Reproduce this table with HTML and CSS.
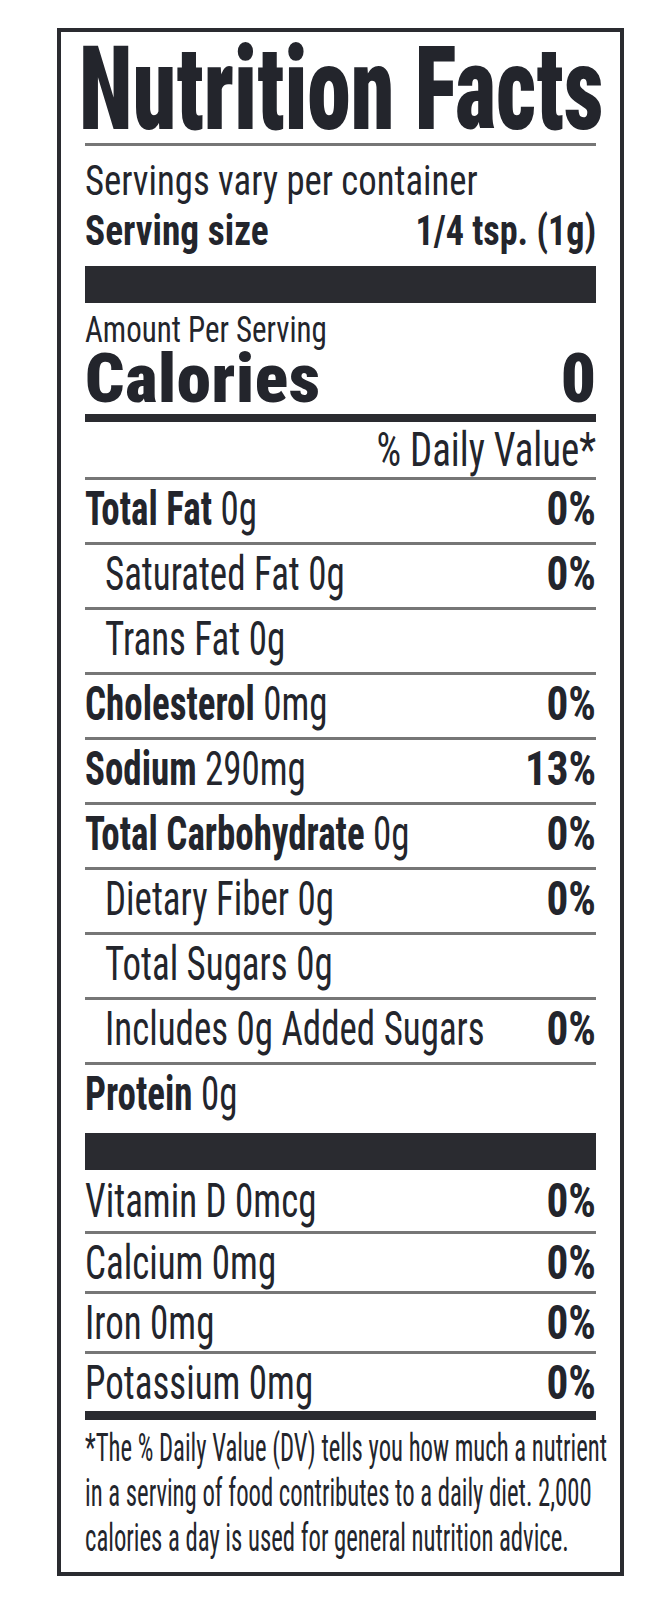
FILE: index.html
```html
<!DOCTYPE html>
<html lang="en">
<head>
<meta charset="utf-8">
<title>Nutrition Facts</title>
<link rel="stylesheet" href="styles.css">
</head>
<body>
<section class="label">
  <h1 class="title">Nutrition Facts</h1>
  <div class="rule"></div>
  <p class="servings">Servings vary per container</p>
  <div class="size-row"><span class="size-name">Serving size</span><span class="size-val">1/4 tsp. (1g)</span></div>
  <div class="bar"></div>
  <p class="amount">Amount Per Serving</p>
  <div class="cal-row"><span>Calories</span><span>0</span></div>
  <div class="thick"></div>
  <div class="dv"><span class="dv-text">% Daily Value*</span></div>
  <ul class="rows">
    <li class="row"><span class="name"><b>Total Fat</b> 0g</span><b class="pct">0%</b></li>
    <li class="row sub"><span class="name">Saturated Fat 0g</span><b class="pct">0%</b></li>
    <li class="row sub"><span class="name">Trans Fat 0g</span></li>
    <li class="row"><span class="name"><b>Cholesterol</b> 0mg</span><b class="pct">0%</b></li>
    <li class="row"><span class="name"><b>Sodium</b> 290mg</span><b class="pct">13%</b></li>
    <li class="row"><span class="name"><b>Total Carbohydrate</b> 0g</span><b class="pct">0%</b></li>
    <li class="row sub"><span class="name">Dietary Fiber 0g</span><b class="pct">0%</b></li>
    <li class="row sub"><span class="name">Total Sugars 0g</span></li>
    <li class="row sub"><span class="name">Includes 0g Added Sugars</span><b class="pct">0%</b></li>
    <li class="row protein"><span class="name"><b>Protein</b> 0g</span></li>
  </ul>
  <div class="bar"></div>
  <ul class="vits">
    <li class="vit"><span class="name">Vitamin D 0mcg</span><b class="pct">0%</b></li>
    <li class="vit"><span class="name">Calcium 0mg</span><b class="pct">0%</b></li>
    <li class="vit"><span class="name">Iron 0mg</span><b class="pct">0%</b></li>
    <li class="vit"><span class="name">Potassium 0mg</span><b class="pct">0%</b></li>
  </ul>
  <div class="thick thick-foot"></div>
  <p class="foot">*The % Daily Value (DV) tells you how much a nutrient<br>in a serving of food contributes to a daily diet. 2,000<br>calories a day is used for general nutrition advice.</p>
</section>
</body>
</html>
```
FILE: styles.css
```css
html, body {
  margin: 0;
  padding: 0;
  background: #ffffff;
}
body {
  font-family: "Roboto Condensed", Roboto, sans-serif;
  color: #23252c;
}
.label {
  box-sizing: border-box;
  width: 567px;
  margin: 28px 0 0 57px;
  padding: 7px 24px 11px;
  border: 4px solid #2a2b30;
  display: flex;
  flex-direction: column;
}
.title {
  margin: 0 0 0 -6px;
  font-size: 116px;
  line-height: 100px;
  font-weight: 900;
  white-space: nowrap;
  transform: scaleX(0.758);
  transform-origin: left center;
}
.rule {
  margin-top: 4px;
  height: 3px;
  background: #767676;
}
.servings {
  margin: 11px 0 0;
  font-size: 42px;
  line-height: 48px;
  font-weight: 400;
  white-space: nowrap;
  transform: scaleX(0.875);
  transform-origin: left center;
}
.size-row {
  margin-top: 2px;
  display: flex;
  justify-content: space-between;
  font-size: 42px;
  line-height: 48px;
  font-weight: 700;
  white-space: nowrap;
}
.size-name {
  transform: scaleX(0.89);
  transform-origin: left center;
}
.size-val {
  transform: scaleX(0.86);
  transform-origin: right center;
}
.bar {
  height: 37px;
  background: #2a2b30;
}
.size-row + .bar { margin-top: 11px; }
.amount {
  margin: 8px 0 0;
  font-size: 36px;
  line-height: 38px;
  font-weight: 400;
  white-space: nowrap;
  transform: scaleX(0.86);
  transform-origin: left center;
}
.cal-row {
  display: flex;
  justify-content: space-between;
  font-family: Roboto, sans-serif;
  font-stretch: 87.5%;
  font-size: 69px;
  line-height: 60px;
  font-weight: 900;
}
.cal-row span:first-child { letter-spacing: 0.7px; }
.thick {
  margin-top: 5px;
  height: 8px;
  background: #2a2b30;
}
.dv {
  margin-top: 3px;
  display: flex;
  justify-content: flex-end;
  font-size: 48px;
  line-height: 50px;
  font-weight: 400;
}
.dv-text {
  white-space: nowrap;
  transform: scaleX(0.81);
  transform-origin: right center;
}
.rows, .vits {
  list-style: none;
  margin: 0;
  padding: 0;
}
.rows { margin-top: 2px; }
.row, .vit {
  display: flex;
  justify-content: space-between;
  border-top: 3px solid #767676;
  font-size: 48px;
  font-weight: 400;
}
.row {
  height: 62px;
  line-height: 58px;
}
.name {
  flex: 1 1 auto;
  min-width: 0;
  white-space: nowrap;
  transform: scaleX(0.77);
  transform-origin: left center;
}
.name b { font-weight: 700; }
.pct {
  flex: none;
  font-weight: 700;
  transform: scaleX(0.9);
  transform-origin: right center;
}
.sub { padding-left: 20px; }
.row.protein { height: 68px; }
.vit {
  height: 57px;
  line-height: 57px;
}
.vit:first-child {
  border-top: 0;
  height: 61px;
  line-height: 61px;
}
.thick-foot {
  margin-top: 0;
  height: 9px;
}
.foot {
  margin: 6px 0 0;
  font-size: 38px;
  line-height: 45px;
  white-space: nowrap;
  transform: scaleX(0.65);
  transform-origin: left top;
}
```
